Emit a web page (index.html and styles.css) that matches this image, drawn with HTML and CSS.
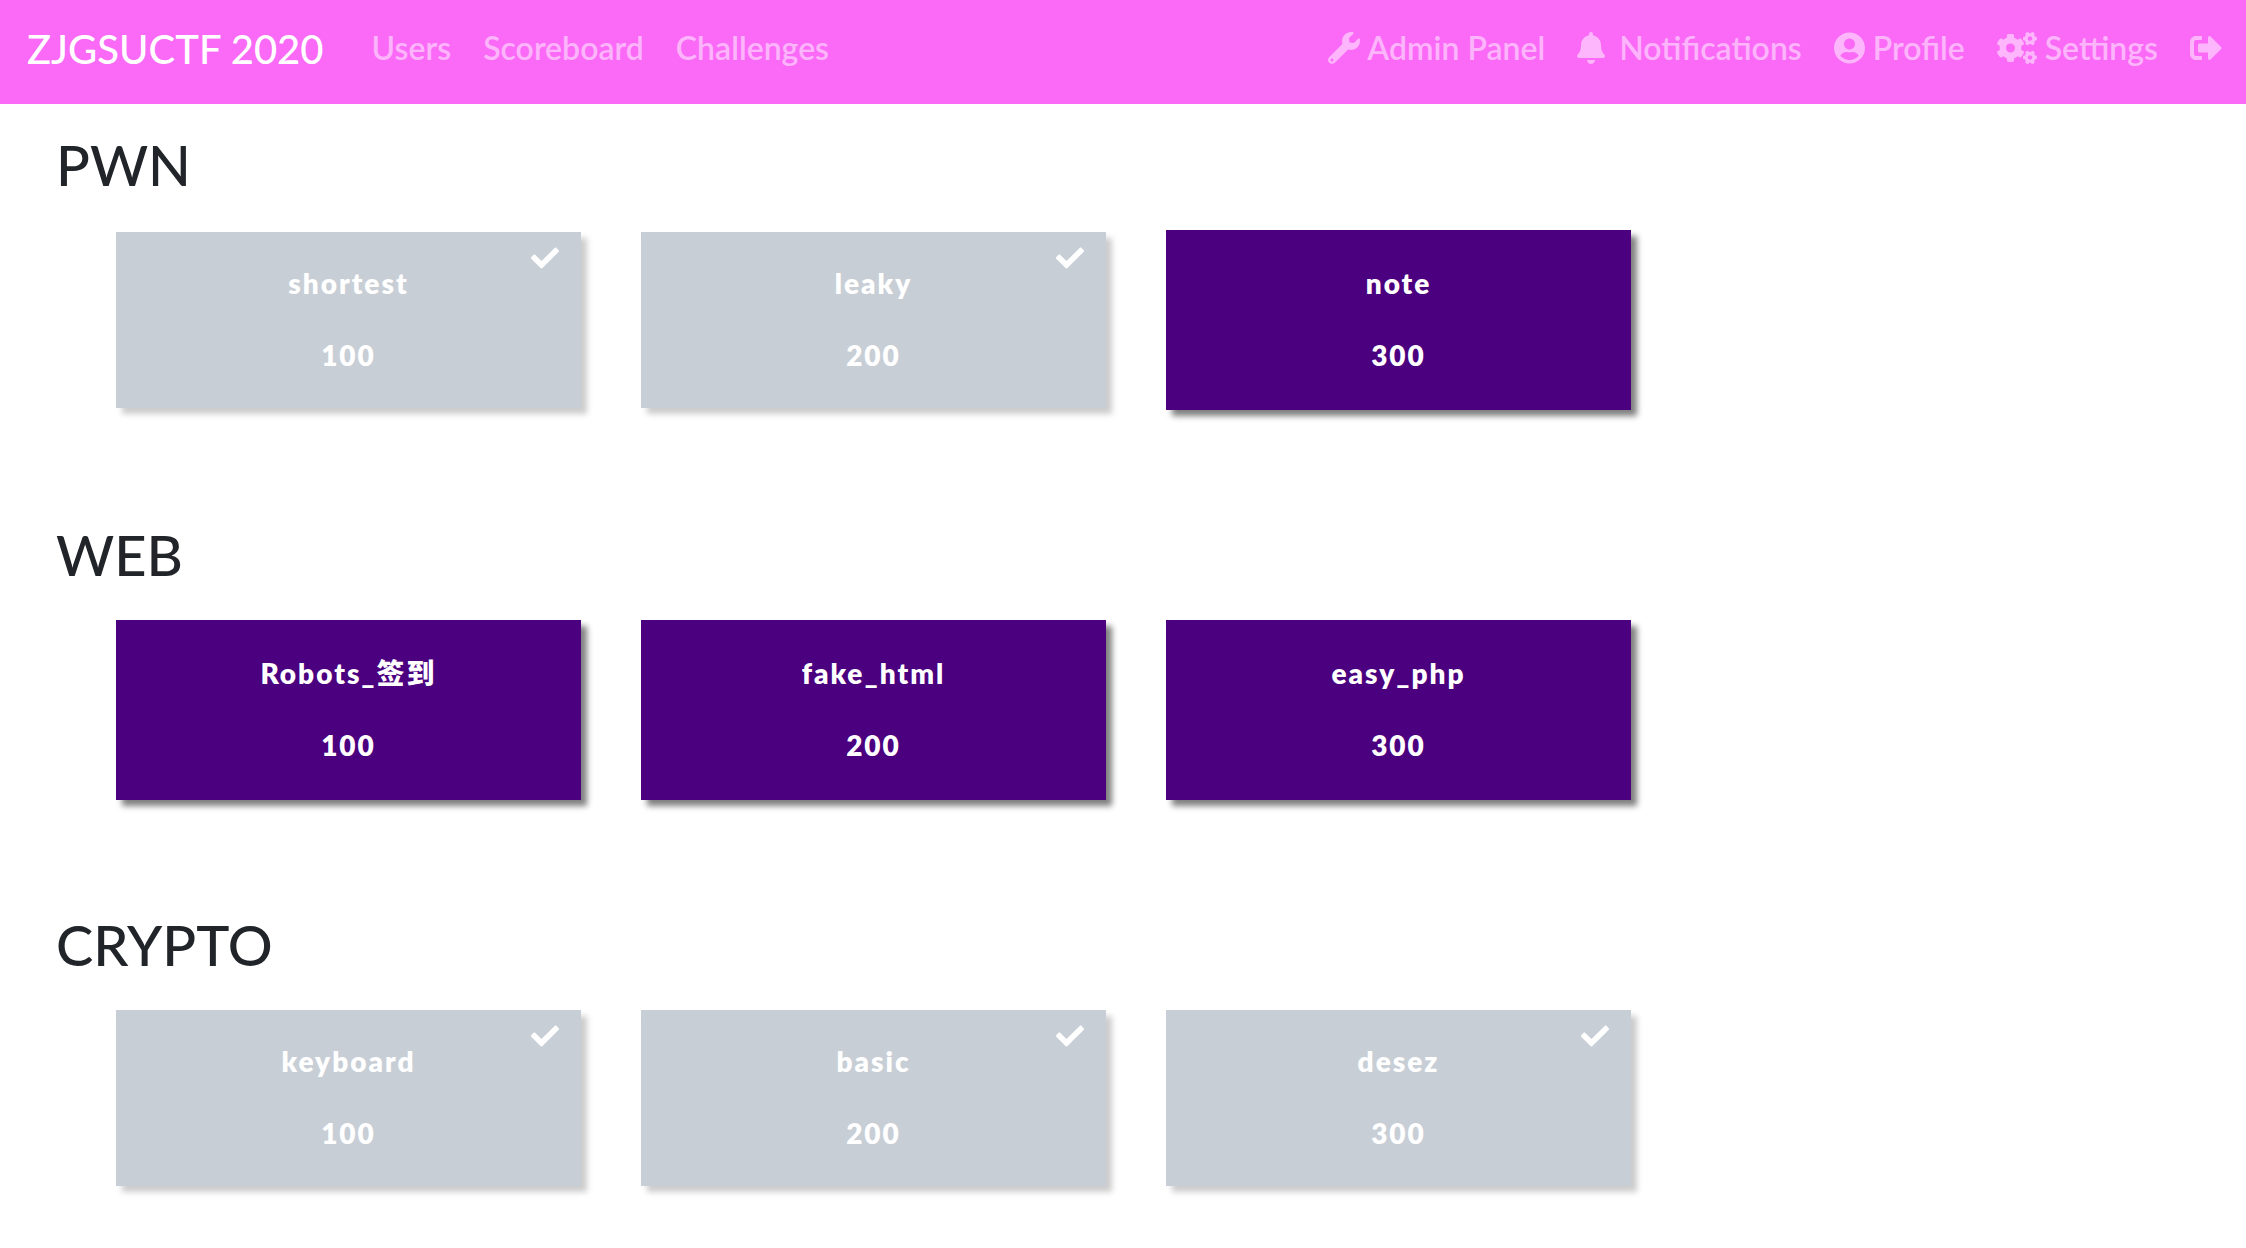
FILE: index.html
```html
<!DOCTYPE html>
<html lang="en">
<head>
<meta charset="utf-8">
<title>ZJGSUCTF 2020</title>
<link rel="stylesheet" href="styles.css">
</head>
<body>
<svg class="sprite" aria-hidden="true">
  <symbol id="check" viewBox="0 0 512 512"><path d="M173.898 439.404l-166.4-166.4c-9.997-9.997-9.997-26.206 0-36.204l36.203-36.204c9.997-9.998 26.207-9.998 36.204 0L192 312.69 432.095 72.596c9.997-9.997 26.207-9.997 36.204 0l36.203 36.204c9.997 9.997 9.997 26.206 0 36.204l-294.4 294.401c-9.998 9.997-26.207 9.997-36.204-.001z"/></symbol>
</svg>
<nav class="navbar">
  <a class="brand" href="#">ZJGSUCTF 2020</a>
  <div class="links">
    <a href="#">Users</a>
    <a href="#">Scoreboard</a>
    <a href="#">Challenges</a>
  </div>
  <div class="links links-end">
    <a href="#"><svg class="icon" viewBox="0 0 512 512"><path d="M507.73 109.1c-2.24-9.03-13.54-12.09-20.12-5.51l-74.36 74.36-67.88-11.31-11.31-67.88 74.36-74.36c6.62-6.62 3.43-17.9-5.66-20.16-47.38-11.74-99.55.91-136.58 37.93-39.64 39.64-50.55 97.1-34.05 147.2L18.74 402.76c-24.99 24.99-24.99 65.51 0 90.5 24.99 24.99 65.51 24.99 90.5 0l213.21-213.21c50.12 16.71 107.47 5.68 147.37-34.22 37.07-37.07 49.7-89.32 37.91-136.73zM64 472c-13.25 0-24-10.75-24-24 0-13.26 10.75-24 24-24s24 10.74 24 24c0 13.25-10.75 24-24 24z"/></svg> Admin Panel</a>
    <a href="#"><svg class="icon icon-bell" viewBox="0 0 448 512"><path d="M224 512c35.32 0 63.97-28.65 63.97-64H160.03c0 35.35 28.65 64 63.97 64zm215.39-149.71c-19.32-20.76-55.47-51.99-55.47-154.29 0-77.7-54.48-139.9-127.94-155.16V32c0-17.67-14.32-32-31.98-32s-31.98 14.33-31.98 32v20.84C118.56 68.1 64.08 130.3 64.08 208c0 102.3-36.15 133.53-55.47 154.29-6 6.45-8.66 14.16-8.61 21.71.11 16.4 12.98 32 32.1 32h383.8c19.12 0 32-15.6 32.1-32 .05-7.55-2.61-15.27-8.61-21.71z"/></svg> Notifications</a>
    <a href="#"><svg class="icon icon-user" viewBox="0 0 496 512"><path d="M248 8C111 8 0 119 0 256s111 248 248 248 248-111 248-248S385 8 248 8zm0 96c48.6 0 88 39.4 88 88s-39.4 88-88 88-88-39.4-88-88 39.4-88 88-88zm0 344c-58.7 0-111.3-26.6-146.5-68.2 18.8-35.4 55.6-59.8 98.5-59.8 2.4 0 4.8.4 7.1 1.1 13 4.2 26.6 6.9 40.9 6.9 14.3 0 28-2.7 40.9-6.9 2.3-.7 4.7-1.1 7.1-1.1 42.9 0 79.7 24.4 98.5 59.8C359.3 421.4 306.7 448 248 448z"/></svg> Profile</a>
    <a href="#"><svg class="icon icon-cogs" viewBox="0 0 640 512"><path id="cog" d="M512.1 191l-8.2 14.3c-3 5.3-9.4 7.5-15.1 5.4-11.8-4.4-22.6-10.7-32.1-18.6-4.6-3.8-5.8-10.5-2.8-15.7l8.2-14.3c-6.9-8-12.3-17.3-15.9-27.4h-16.5c-6 0-11.2-4.3-12.2-10.3-2-12-2.1-24.6 0-37.1 1-6 6.2-10.4 12.2-10.4h16.5c3.6-10.1 9-19.4 15.9-27.4l-8.2-14.3c-3-5.2-1.9-11.9 2.8-15.7 9.5-7.9 20.4-14.2 32.1-18.6 5.7-2.1 12.1.1 15.1 5.4l8.2 14.3c10.5-1.9 21.2-1.9 31.7 0L552 6.3c3-5.3 9.4-7.5 15.1-5.4 11.8 4.4 22.6 10.7 32.1 18.6 4.6 3.8 5.8 10.5 2.8 15.7l-8.2 14.3c6.9 8 12.3 17.3 15.9 27.4h16.5c6 0 11.2 4.3 12.2 10.3 2 12 2.1 24.6 0 37.1-1 6-6.2 10.4-12.2 10.4h-16.5c-3.6 10.1-9 19.4-15.9 27.4l8.2 14.3c3 5.2 1.9 11.9-2.8 15.7-9.5 7.9-20.4 14.2-32.1 18.6-5.7 2.1-12.1-.1-15.1-5.4l-8.2-14.3c-10.4 1.9-21.2 1.9-31.7 0zm-10.5-58.8c38.5 29.6 82.4-14.3 52.8-52.8-38.5-29.7-82.4 14.3-52.8 52.8z"/><use href="#cog" y="301"/><path d="M386.3 286.1l33.7 16.8c10.1 5.8 14.5 18.1 10.5 29.1-8.9 24.2-26.4 46.4-42.6 65.8-7.4 8.9-20.2 11.1-30.3 5.3l-29.1-16.8c-16 13.7-34.6 24.6-54.9 31.7v33.6c0 11.6-8.3 21.6-19.7 23.6-24.6 4.2-50.4 4.4-75.9 0-11.5-2-20-11.9-20-23.6V418c-20.3-7.2-38.9-18-54.9-31.7L74 403c-10 5.8-22.9 3.6-30.3-5.3-16.2-19.4-33.3-41.6-42.2-65.7-4-10.9.4-23.2 10.5-29.1l33.3-16.8c-3.9-20.9-3.9-42.4 0-63.4L12 205.8c-10.1-5.8-14.6-18.1-10.5-29 8.9-24.2 26-46.4 42.2-65.8 7.4-8.9 20.2-11.1 30.3-5.3l29.1 16.8c16-13.7 34.6-24.6 54.9-31.7V57.1c0-11.5 8.2-21.5 19.6-23.5 24.6-4.2 50.5-4.4 76-.1 11.5 2 20 11.9 20 23.6v33.6c20.3 7.2 38.9 18 54.9 31.7l29.1-16.8c10-5.8 22.9-3.6 30.3 5.3 16.2 19.4 33.2 41.6 42.1 65.8 4 10.9.1 23.2-10 29.1l-33.7 16.8c3.9 21 3.9 42.5 0 63.5zm-117.6 21.1c59.2-77-28.7-164.9-105.7-105.7-59.2 77 28.7 164.9 105.7 105.7z"/></svg> Settings</a>
    <a href="#" aria-label="Logout"><svg class="icon" viewBox="0 0 512 512"><path d="M497 273L329 441c-15 15-41 4.5-41-17v-96H152c-13.3 0-24-10.7-24-24v-96c0-13.3 10.7-24 24-24h136V88c0-21.4 25.9-32 41-17l168 168c9.3 9.4 9.3 24.6 0 34zM192 436v-40c0-6.6-5.4-12-12-12H96c-17.7 0-32-14.3-32-32V160c0-17.7 14.3-32 32-32h84c6.6 0 12-5.4 12-12V76c0-6.6-5.4-12-12-12H96c-53 0-96 43-96 96v192c0 53 43 96 96 96h84c6.6 0 12-5.4 12-12z"/></svg></a>
  </div>
</nav>
<main class="board">
  <section class="category">
    <h3>PWN</h3>
    <div class="cards">
      <button class="card solved"><svg class="tick"><use href="#check"/></svg><span>shortest</span><span>100</span></button>
      <button class="card solved"><svg class="tick"><use href="#check"/></svg><span>leaky</span><span>200</span></button>
      <button class="card"><span>note</span><span>300</span></button>
    </div>
  </section>
  <section class="category">
    <h3>WEB</h3>
    <div class="cards">
      <button class="card"><span>Robots_签到</span><span>100</span></button>
      <button class="card"><span>fake_html</span><span>200</span></button>
      <button class="card"><span>easy_php</span><span>300</span></button>
    </div>
  </section>
  <section class="category">
    <h3>CRYPTO</h3>
    <div class="cards">
      <button class="card solved"><svg class="tick"><use href="#check"/></svg><span>keyboard</span><span>100</span></button>
      <button class="card solved"><svg class="tick"><use href="#check"/></svg><span>basic</span><span>200</span></button>
      <button class="card solved"><svg class="tick"><use href="#check"/></svg><span>desez</span><span>300</span></button>
    </div>
  </section>
</main>
</body>
</html>
```
FILE: styles.css
```css
* {
  box-sizing: border-box;
}

body {
  margin: 0;
  background: #fff;
  color: #212529;
  font-family: Lato, "Noto Sans CJK SC", sans-serif;
}

.sprite {
  display: none;
}

.navbar {
  display: flex;
  align-items: flex-start;
  padding: 20px 8px 26px 27px;
  background: #fa6af7;
}

.navbar a {
  text-decoration: none;
  white-space: nowrap;
}

.brand {
  margin-right: 32px;
  color: #fff;
  font-size: 40px;
  font-weight: 500;
  line-height: 58px;
}

.links {
  display: flex;
}

.links a {
  padding: 4px 16px;
  color: rgba(255, 255, 255, 0.5);
  font-size: 32px;
  font-weight: 600;
  line-height: 48px;
}

.links-end {
  margin-left: auto;
}

.icon {
  width: 32px;
  height: 32px;
  fill: currentColor;
  vertical-align: -4px;
}

.icon-bell {
  width: 28px;
  margin-right: 6px;
}

.icon-user {
  width: 31px;
}

.icon-cogs {
  width: 40px;
}

.board {
  padding: 27px 90px 40px 56px;
}

.category + .category {
  margin-top: 111px;
}

.category h3 {
  margin: 0 0 31px;
  font-size: 56px;
  font-weight: 500;
  line-height: 68px;
}

.cards {
  display: grid;
  grid-template-columns: repeat(4, 1fr);
  gap: 60px;
  align-items: center;
  padding-left: 60px;
}

.card {
  position: relative;
  display: flex;
  flex-direction: column;
  align-items: center;
  gap: 32px;
  padding: 33px 0 35px;
  border: 0;
  background: #4a007f;
  box-shadow: 6px 6px 6px #808080;
  color: #fff;
  font-family: inherit;
  font-size: 28px;
  font-weight: 800;
  letter-spacing: 2px;
  line-height: 40px;
}

.solved {
  padding: 31px 0 33px;
  background: #c8ced6;
  box-shadow: 6px 6px 6px #cccccc;
}

.tick {
  position: absolute;
  top: 12px;
  right: 22px;
  width: 28px;
  height: 28px;
  fill: #fff;
}
```
